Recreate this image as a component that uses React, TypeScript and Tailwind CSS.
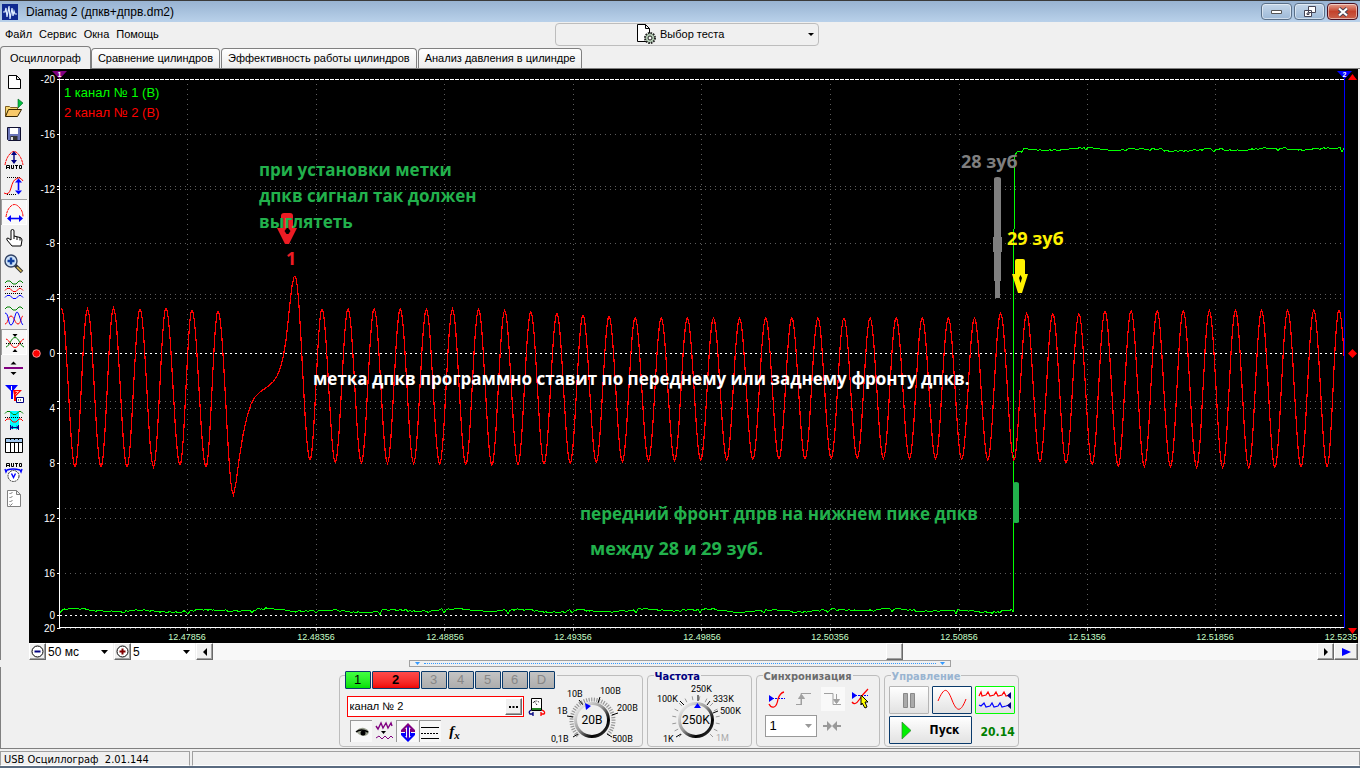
import React, { useState } from 'react';
import { clsx } from 'clsx';

type Point = [number, number];

const menu = ['Файл', 'Сервис', 'Окна', 'Помощь'];
const tabs = ['Осциллограф', 'Сравнение цилиндров', 'Эффективность работы цилиндров', 'Анализ давления в цилиндре'];

// ---------- signals ----------

const PERIOD = 26.1;
const peakLevels: Point[] = [[322, 309], [480, 309], [580, 315], [640, 318], [975, 318], [1001, 313], [1080, 314], [1105, 311], [1345, 310]];
const troughLevels: Point[] = [[322, 462], [500, 465], [640, 461], [850, 458], [1014, 460], [1120, 466], [1240, 468], [1360, 466]];

function lerp(table: Point[], x: number) {
  for (let i = 1; i < table.length; i++) {
    const [x0, y0] = table[i - 1];
    const [x1, y1] = table[i];
    if (x <= x1) return y0 + ((y1 - y0) * (x - x0)) / (x1 - x0);
  }
  return table[table.length - 1][1];
}

function swing(points: Point[]) {
  const out: Point[] = [];
  for (let i = 1; i < points.length; i++) {
    const [x0, y0] = points[i - 1];
    const [x1, y1] = points[i];
    for (let s = 0; s < 12; s++) {
      const t = s / 12;
      out.push([x0 + (x1 - x0) * t, y0 + ((y1 - y0) * (1 - Math.cos(Math.PI * t))) / 2]);
    }
  }
  out.push(points[points.length - 1]);
  return out;
}

const toPath = (points: Point[]) => 'M' + points.map(([x, y]) => `${x.toFixed(1)},${y.toFixed(1)}`).join('L');

function crankSignal() {
  const before: Point[] = [
    [61.5, 308], [75, 467], [87.5, 309], [101, 467], [113.5, 308], [127, 467], [140, 309], [153.5, 467],
    [166, 308], [180, 465], [192, 310], [206, 467], [218, 311], [233.5, 495],
  ];
  const gap: Point[] = [
    [236, 483], [239, 460], [243, 435], [247, 417], [251, 404], [255, 397], [260, 392], [267, 387],
    [273, 382], [277, 376], [280, 369], [283, 358], [286, 340], [288, 322], [290, 303], [292, 286], [294, 277],
  ];
  const after: Point[] = [[295, 276], [310, 460]];
  for (let k = 0; k < 39; k++) {
    const x = 322 + k * PERIOD;
    after.push([x, lerp(peakLevels, x)], [x + 13.3, lerp(troughLevels, x + 13.3)]);
  }
  after.push([1339, 310], [1353, 466]);
  return toPath([...swing(before), ...gap, ...swing(after)]);
}

function noise(from: number, to: number, level: number): Point[] {
  const out: Point[] = [];
  for (let x = from; x <= to; x += 2) {
    const rnd = Math.sin(x * 12.9898) * 43758.5453;
    const dip = Math.round(x - from) % 64 < 2 ? 3 : 0;
    out.push([x, level - Math.sin(x / 10) * 1.1 - Math.sin(x / 33) * 0.8 + (rnd - Math.floor(rnd) - 0.5) * 2 + dip]);
  }
  return out;
}

const redPath = crankSignal();
const greenPath = toPath([
  ...noise(60, 1012, 610.5), [1013, 612], [1013, 455], [1014, 230], [1015, 155], [1017, 152], [1020, 151], ...noise(1022, 1344, 149.5),
]);

const gridX = [187, 316, 444, 573, 701, 830, 959, 1087, 1215];
const gridY = [134, 186, 189, 243, 294, 298, 401, 408, 463, 508, 518, 573];
const axisY: [string, number][] = [
  ['-20', 79], ['-16', 134], ['-12', 189], ['-8', 243], ['-4', 298], ['0', 353], ['4', 408], ['8', 463], ['12', 518], ['16', 573], ['0', 615], ['20', 628],
];
const axisX: [string, number][] = [
  ['12.47856', 187], ['12.48356', 316], ['12.48856', 445], ['12.49356', 573], ['12.49856', 702], ['12.50356', 830], ['12.50856', 959], ['12.51356', 1087], ['12.51856', 1215], ['12.5235', 1341],
];

function Chart() {
  return (
    <svg viewBox="29 69 1329 574" className="block w-full bg-black font-['Liberation_Sans',sans-serif]" role="img" aria-label="Осциллограмма">
      <defs>
        <clipPath id="plot"><rect x="60" y="70" width="1284" height="558" /></clipPath>
      </defs>
      <g stroke="#5c5c5c" strokeDasharray="1 4" shapeRendering="crispEdges">
        {gridX.map((x) => <path key={x} d={`M${x + 0.5} 84V628`} />)}
        {gridY.map((y) => <path key={y} d={`M65 ${y + 0.5}H1344`} />)}
      </g>
      <g stroke="#fff" shapeRendering="crispEdges">
        <path d="M60 79.5H1344" strokeDasharray="4 1" />
        <path d="M60 353.5H1344M60 615.5H1344" strokeDasharray="2 3" />
        <path d="M59.5 74V628M59 627.5H1345" />
        {axisY.map(([label, y]) => <path key={label + y} d={`M57 ${y + 0.5}H60`} />)}
        <path d="M57 186.5H60M57 294.5H60M57 401.5H60M57 508.5H60" />
        <path d="M60 628.5H1344" stroke="#777" strokeDasharray="1 4" />
        {gridX.map((x) => <path key={x} d={`M${x + 0.5} 628V631`} stroke="#aaa" />)}
      </g>
      <g fontSize="10" fill="#fff" textAnchor="end">
        {axisY.map(([label, y]) => <text key={label + y} x="55" y={y + 4}>{label}</text>)}
      </g>
      <g fontSize="9" fill="#c8ffc8" textAnchor="middle">
        {axisX.map(([label, x]) => <text key={label} x={x} y="640">{label}</text>)}
      </g>

      <g fill="none" clipPath="url(#plot)" shapeRendering="crispEdges">
        <path d={greenPath} stroke="#00ff00" />
        <path d={redPath} stroke="#ff0000" strokeWidth="1.2" />
      </g>
      <path d="M1344.5 76V628" stroke="#0000ff" strokeWidth="1.4" shapeRendering="crispEdges" />

      <path d="M52 71h15l-7.500 8z" fill="#800080" />
      <path d="M1337 71h15l-7.500 8z" fill="#0000ff" />
      <g fontSize="7" fontWeight="700" fill="#fff" textAnchor="middle">
        <text x="59.500" y="77">1</text>
        <text x="1344.500" y="77">2</text>
      </g>
      <path d="M1348 80h9l-4.500-6zM1348 628h9l-4.500 6zM1348 353.500l4.500-4.500 4.500 4.500-4.500 4.500z" fill="#ff0000" />
      <circle cx="36.500" cy="353.500" r="3.800" fill="#ff0000" stroke="#ff9090" />

      <g fontSize="13">
        <text x="64" y="97" fill="#00ff00">1 канал № 1 (В)</text>
        <text x="64" y="117" fill="#ff0000">2 канал № 2 (В)</text>
      </g>

      <path d="M281 216q0-3 3-3h6q3 0 3 3v12h4l-8 16h-4l-8-16h4z" fill="#ed1c24" />
      <path d="M287.500 227l3 4-2 3h-2l-2-3z" fill="#000" />
      <path d="M1015 261q0-2 2-2h6q2 0 2 2v13h3l-6 19h-4l-6-19h3z" fill="#fff200" />
      <path d="M1020.500 275l1.500 3-1.500 5-1.500-5z" fill="#000" />
      <path d="M994 179q0-2 3-2h1q3 0 3 2v58h1v15h-1v29h-1v17h-5v-17h-1v-29h-1v-15h1z" fill="#7f7f7f" />
      <path d="M1013 484q0-2 3-2t3 2v38q0 1-3 1t-3-1z" fill="#22b14c" />

      <g fontSize="17" fontWeight="700" fill="#22b14c" className="font-['Open_Sans',sans-serif]">
        <text x="259" y="176">при установки метки</text>
        <text x="259" y="202">дпкв сигнал так должен</text>
        <text x="259" y="228">выглятеть</text>
        <text x="286" y="265" fontSize="18" fill="#ed1c24">1</text>
        <text x="961" y="168" fontSize="18" fill="#7f7f7f">28 зуб</text>
        <text x="1007" y="245" fontSize="18" fill="#fff200">29 зуб</text>
        <text x="313" y="385" fill="#fff">метка дпкв программно ставит по переднему или заднему фронту дпкв.</text>
        <text x="580" y="520">передний фронт дпрв на нижнем пике дпкв</text>
        <text x="590" y="555" fontSize="18">между 28 и 29 зуб.</text>
      </g>
    </svg>
  );
}

// ---------- toolbar ----------

const wave = (y: number) => `M4 ${y + 2}l2-2h3l3 3h3l3-3h2l2 2`;
const dots = { stroke: '#000', strokeDasharray: '1 1' };

const tools: { label: string; on?: boolean; art: React.ReactNode }[] = [
  { label: 'Новый', art: <path d="M7.500 6.500h8l4 4v9h-12zM15.500 6.500v4h4" fill="#fff" stroke="#000" /> },
  {
    label: 'Открыть',
    art: (
      <>
        <path d="M4.500 21V11.500h4l1 1h7v2" fill="#f7d774" stroke="#806020" />
        <path d="M4.500 21.500l3-7h13l-4 7z" fill="#f9c96a" stroke="#332200" />
        <path d="M17 4l5 4-5 5z" fill="#00c040" stroke="#006020" strokeWidth=".6" />
      </>
    ),
  },
  {
    label: 'Сохранить',
    art: (
      <>
        <path d="M6.500 6.500h13v13h-12l-1-1z" fill="#6a74b8" stroke="#101030" />
        <path d="M9 7h8v6H9z" fill="#fff" />
        <path d="M9.500 15h7v4h-7z" fill="#333" />
        <path d="M10 16h2v3h-2z" fill="#ddd" />
      </>
    ),
  },
  {
    label: 'Авто амплитуда',
    art: (
      <>
        <path d="M4 18q1-6 4-10 5-7 10 0 3 4 4 10" stroke="#f00" strokeDasharray="3 .6" />
        <path d="M13 7v8" stroke="#000080" strokeWidth="1.400" />
        <path d="M10 8l3-4 3 4zM10 13l3 4 3-4z" fill="#000080" />
        <path d="M5.500 22v-3.500h3V22M5.500 20.500h3M10.500 18v3.500h2V18M14 18.500h3M15.500 18.500V22M18.500 18.500h2v3h-2z" stroke="#000" />
      </>
    ),
  },
  {
    label: 'Масштаб по вертикали',
    art: (
      <>
        <path d="M6 4.500h14M6 21.500h10" {...dots} />
        <path d="M3 20q5 3 7-5t5-9q4-3 7 2" stroke="#f00" />
        <path d="M17.500 9v8" stroke="#00f" strokeWidth="1.600" />
        <path d="M14 9.500l3.500-4 3.500 4zM14 17.500l3.500 4 3.500-4z" fill="#00f" />
      </>
    ),
  },
  {
    label: 'Масштаб по горизонтали',
    on: true,
    art: (
      <>
        <path d="M5 18q1-7 4-10 4.500-5 9 0 4 4 4 10" stroke="#f00" strokeDasharray="3 .6" />
        <path d="M9 19.500h9" stroke="#00f" strokeWidth="1.600" />
        <path d="M10 16l-4 3.500 4 3.500zM18 16l4 3.500-4 3.500z" fill="#00f" />
      </>
    ),
  },
  {
    label: 'Рука',
    art: <path d="M11 21l-5-6q-1-2 1-2l3 2V6q0-1.500 1.500-1.500T13 6v5l6 1.500q2 .5 2 2.500l-1 6zM13 11v3M16 12v3M19 12.500v3" fill="#fff" stroke="#000" />,
  },
  {
    label: 'Лупа',
    art: (
      <>
        <path d="M14 14l7 7" stroke="#333" strokeWidth="3.500" />
        <path d="M16 16l4.500 4.500" stroke="#e0c050" strokeWidth="1.500" />
        <circle cx="10" cy="10" r="6" fill="#cfe4fa" stroke="#334466" strokeWidth="1.400" />
        <path d="M10 6.500v7M6.500 10h7" stroke="#1040a0" strokeWidth="2.400" />
      </>
    ),
  },
  {
    label: 'Разнести каналы',
    art: (
      <>
        <path d={wave(4)} stroke="#008000" />
        <path d="M4 9.500h18M4 16.500h18" {...dots} />
        <path d={wave(11.5)} stroke="#f00" />
        <path d={wave(18.5)} stroke="#00f" />
      </>
    ),
  },
  {
    label: 'Наложить каналы',
    art: (
      <>
        <path d={wave(4)} stroke="#008000" />
        <path d="M4 21C7 21 7 13 10 13s4 8 7 8 3-8 5-8" stroke="#f00" />
        <path d="M4 10C8 10 7 22 10 22S14 9 16 9s4 12 6 13" stroke="#00f" />
      </>
    ),
  },
  {
    label: 'Совместить нули',
    on: true,
    art: (
      <>
        <path d="M11.500 5h5L14 8zM11.500 23h5L14 20z" fill="#000" />
        <path d="M5 18C9 17 10 8.500 14 8.500s5 8.500 9 9.500" stroke="#008000" />
        <path d="M5 10C9 11 10 18.500 14 18.500s5-7.500 9-8.500" stroke="#f00" />
        <path d="M5 14.500h18" {...dots} />
      </>
    ),
  },
  {
    label: 'Сдвиг',
    art: (
      <>
        <path d="M9.500 9.500h6l-3-3zM9.500 17h6l-3 3z" fill="#000" />
        <path d="M3 13h19" stroke="#800080" strokeWidth="2" />
      </>
    ),
  },
  {
    label: 'Метки',
    art: (
      <>
        <path d="M4 4h13l-5 6v8h-2v-8z" fill="#00f" />
        <path d="M10.500 5v4" stroke="#fff" />
        <path d="M12 9h9l-6 6v5h-2v-6z" fill="#f00" />
        <path d="M14.500 10.500h3l-3 3" stroke="#fff" strokeWidth=".7" />
        <path d="M15.500 16.500h7v5h-7z" fill="#fff" stroke="#000080" />
        <path d="M17 19h4" stroke="#000" strokeDasharray="1 1" />
      </>
    ),
  },
  {
    label: 'Область',
    art: (
      <>
        <path d="M9 4h9v18H9z" fill="#0ff" />
        <path d={wave(4.5)} stroke="#008000" />
        <path d="M4 10.500h18" {...dots} />
        <path d={wave(12)} stroke="#f00" />
        <path d="M9.500 18v5M17.500 18v5M10 20.500h8M12 19l-2 1.500 2 1.500M15.500 19l2 1.500-2 1.500" stroke="#000080" />
      </>
    ),
  },
  {
    label: 'Таблица',
    art: (
      <>
        <path d="M4.500 5.500h17v14h-17z" fill="#fff" stroke="#000" />
        <path d="M5 6h16v3H5z" fill="#a0c8f0" />
        <path d="M4 9.500h18M9.500 9v10M13.500 9v10M17.500 9v10M9.500 6v1M13.500 6v1M17.500 6v1" stroke="#000" />
      </>
    ),
  },
  {
    label: 'Авто напряжение',
    art: (
      <>
        <path d="M5.500 8V4.500h3V8M5.500 6.500h3M10.500 4v3.500h2V4M14 4.500h3M15.500 4.500V8M18.500 4.500h2v3h-2z" stroke="#000" />
        <path d="M4 10l1 3 1-2q6-2 13 0l1 2 1-3" stroke="#00f" strokeWidth="1.400" />
        <circle cx="12.500" cy="17" r="5.500" fill="#fff" stroke="#333" strokeDasharray="2 .7" />
        <path d="M10.500 14.500l2 4 2-4" stroke="#00f" strokeWidth="1.400" />
      </>
    ),
  },
  {
    label: 'Отчёт',
    art: (
      <path d="M6.500 5.500h9l4 4v12h-13zM15.500 5.500v4h4M8.500 8l1 1 2-2M8.500 12l1 1 2-2M8.500 16l1 1 2-2M8.500 19.500l1 1 2-2" fill="#fff" stroke="#808080" />
    ),
  },
];

// ---------- small parts ----------

function Select({ label, value, className, box }: { label: string; value: string; className?: string; box?: string }) {
  return (
    <span className={clsx('relative flex', box)}>
      <select aria-label={label} defaultValue={value} className={clsx('w-full appearance-none bg-white pl-0.5 outline-none', className)}>
        <option>{value}</option>
      </select>
      <svg className="pointer-events-none absolute right-[5px] top-1/2 -mt-0.5 h-1 w-[7px]" viewBox="0 0 7 4"><path d="M0 0h7L3.500 4z" fill="currentColor" /></svg>
    </span>
  );
}

const raised = 'flex items-center justify-center border border-t-white border-l-white border-r-[#696969] border-b-[#696969] bg-[#f0f0f0] shadow-[inset_-1px_-1px_0_#a0a0a0]';

function Group({ title, color, className, children }: { title: string; color: string; className: string; children: React.ReactNode }) {
  return (
    <section className={clsx('h-[72px] rounded border border-[#bdbdbd]', className)}>
      <h2 className={clsx("-mt-[5px] ml-1.5 w-fit bg-[#f0f0f0] px-px font-['DejaVu_Sans_Condensed','DejaVu_Sans',sans-serif] text-[11px] leading-3 font-bold", color)}>{title}</h2>
      {children}
    </section>
  );
}

function ticks(cx: number, cy: number, r0: number, r1: number, step: number) {
  let d = '';
  for (let a = -225; a <= 46; a += step) {
    const c = Math.cos((a * Math.PI) / 180);
    const s = Math.sin((a * Math.PI) / 180);
    d += `M${(cx + r0 * c).toFixed(1)} ${(cy + r0 * s).toFixed(1)}L${(cx + r1 * c).toFixed(1)} ${(cy + r1 * s).toFixed(1)}`;
  }
  return d;
}

function KnobFace({ cx, cy, value }: { cx: number; cy: number; value: string }) {
  return (
    <>
      <circle cx={cx} cy={cy} r="16.500" fill="#efefef" stroke="url(#rim)" strokeWidth="3" />
      <text x={cx} y={cy + 4} fontSize="12" textAnchor="middle">{value}</text>
    </>
  );
}

function VoltKnob() {
  return (
    <svg width="92" height="62" viewBox="549 684 92 62" role="img" aria-label="20В" className="font-['Roboto',sans-serif]">
      <defs>
        <linearGradient id="rim" x1="0" y1="0" x2="1" y2="1">
          <stop offset="0" stopColor="#fff" /><stop offset=".45" stopColor="#999" /><stop offset=".75" stopColor="#000" /><stop offset="1" stopColor="#444" />
        </linearGradient>
      </defs>
      <path d={ticks(592.5, 720.5, 19, 23, 7)} stroke="#999" strokeWidth="1.200" />
      <path d="M567 716l6 1M579 700l4 5M600 697l-2 6M618 713l-6 2M573 737l5-3M612 737l-5-3" stroke="#000" />
      <KnobFace cx={592} cy={720} value="20В" />
      <path d="M585 703l6 3-5 4z" fill="#00f" />
      <g fontSize="9">
        <text x="567" y="697">10В</text><text x="600" y="694">100В</text><text x="557" y="714">1В</text>
        <text x="617" y="711">200В</text><text x="551" y="742">0,1В</text><text x="612" y="742">500В</text>
      </g>
    </svg>
  );
}

function RateKnob() {
  return (
    <svg width="98" height="62" viewBox="650 683 98 62" role="img" aria-label="250K" className="font-['Roboto',sans-serif]">
      <path d={ticks(696, 720, 20, 24, 18)} stroke="#999" />
      <path d="M680 701l4 4M698 695v6M710 701l-3 4M718 711l-5 2M676 737l5-3" stroke="#000" />
      <KnobFace cx={696} cy={720} value="250K" />
      <path d="M694 708l3.500-5 3.500 5z" fill="#00f" />
      <g fontSize="9">
        <text x="691" y="692">250K</text><text x="657" y="702">100K</text><text x="713" y="702">333K</text>
        <text x="720" y="714">500K</text><text x="663" y="742">1K</text><text x="716" y="741" fill="#aaa">1M</text>
      </g>
    </svg>
  );
}

const channelTabs = ['1', '2', '3', '4', '5', '6', 'D'];
const blueEdge = 'border border-[#0a3a6b]';
const sunken = 'border-t border-l border-t-[#999] border-l-[#999] bg-[#f8f8f8]';

function ChannelGroup() {
  const [name, setName] = useState('канал № 2');
  return (
    <section className="flex h-[72px] w-[304px] rounded border border-[#bdbdbd]">
      <div className="-mt-[5px] ml-[5px] w-[204px]">
        <div className="flex w-[212px] gap-px bg-[#f0f0f0] text-[13px] text-[#888]">
          {channelTabs.map((c) => (
            <button
              key={c}
              className={clsx(
                'h-[18px] rounded-[1px] leading-4', blueEdge,
                c === '1' && 'w-[26px] bg-linear-to-b from-[#40ff40] to-[#00e000] text-black',
                c === '2' && 'w-12 bg-linear-to-b from-[#ff4a4a] to-[#f00000] font-bold text-black',
                c !== '1' && c !== '2' && 'w-[26px] bg-linear-to-b from-[#c4c4c4] to-[#adadad]'
              )}
            >
              {c}
            </button>
          ))}
        </div>
        <div className="mt-[7px] ml-0.5 flex items-center gap-1">
          <div className="flex h-[21px] w-[177px] shrink-0 items-center border border-[#f00] bg-white pr-px">
            <input aria-label="Имя канала" value={name} onChange={(e) => setName(e.target.value)} className="w-0 grow pl-0.5 text-[11px] outline-none" />
            <button aria-label="Выбрать канал" className={clsx(raised, 'h-[17px] w-[17px]')}>
              <svg width="9" height="2"><path d="M0 1h2M3.500 1h2M7 1h2" stroke="#000" strokeWidth="2" /></svg>
            </button>
          </div>
          <button aria-label="Прибор" className="shrink-0">
            <svg width="18" height="20" fill="none">
              <path d="M3.500 1.500h10v12h-10z" fill="#fff" stroke="#000" /><path d="M4 11h9v2H4z" fill="#208020" />
              <path d="M5 6q3-4 7 0M9 8L6 4" stroke="#000" strokeDasharray="1 1" />
              <path d="M3 13q-3 2-1 4h3M5 15v4" stroke="#000080" strokeWidth="1.300" /><path d="M14 13q4 2 2 4h-3M13 15v4" stroke="#f00" strokeWidth="1.300" />
            </svg>
          </button>
        </div>
        <div className="mt-[3px] flex h-[22px] gap-px pl-[5px]">
          <button aria-label="Видимость" className={clsx('w-[22px] pl-1', sunken)}>
            <svg width="15" height="14"><path d="M1 6q4-4 8-3 4 1 5 4-1 4-6 4-5-1-7-5z" fill="#9aa090" /><path d="M1 7q5-4 12 0" stroke="#000" fill="none" strokeWidth="1.500" /><circle cx="8" cy="8" r="2.500" /></svg>
          </button>
          <button aria-label="Фильтр" className="w-[22px] pl-0.5">
            <svg width="18" height="20" fill="none" stroke="#800080"><path d="M1 5l2 3 3-6 2 5 3-5 2 5 3-5 1 3" strokeWidth="1.400" /><path d="M6 10h5l-2.500 3z" fill="#000" stroke="none" /><path d="M1 17l3-2 3 3 3-3 3 3 3-3 2 2" /></svg>
          </button>
          <button aria-label="Инверсия" className={clsx('w-[22px] pl-0.5', sunken)}>
            <svg width="18" height="20"><path d="M9 1l7 7v2h-4v1H6v-1H2V8z" fill="#800080" /><path d="M9 20l7-7v-2h-4v-1H6v1H2v2z" fill="#00f" /><path d="M9 4l3 3h-1v7h1l-3 3-3-3h1V7H6z" fill="#f8f8f8" /><path d="M9 4v13" stroke="#40c" strokeWidth="2" /></svg>
          </button>
          <button aria-label="Уровни" className={clsx('w-[22px] pl-px', sunken)}>
            <svg width="18" height="18" stroke="#000"><path d="M0 4.500h18M0 15.500h18" /><path d="M0 10.500h18" strokeDasharray="2 1" /></svg>
          </button>
          <button aria-label="Функция" className="w-[26px] font-['Liberation_Serif',serif] text-[15px] leading-5 font-bold italic">f<sub className="text-[11px]">x</sub></button>
        </div>
      </div>
      <div className="mt-2"><VoltKnob /></div>
    </section>
  );
}

function SyncGroup() {
  return (
    <Group title="Синхронизация" color="text-[#6d6d6d]" className="w-[124px]">
      <div className="mt-1 flex h-[24px] gap-1 pl-2">
        <button aria-label="Синхронизация по каналу" className="w-6"><svg width="22" height="22" fill="none"><path d="M4 10.500h16" stroke="#00f" strokeDasharray="2 1" /><path d="M4 7v7l5-3.500z" fill="#00f" /><path d="M4 16q2 4 5 3t4-8q2-6 6-7" stroke="#f00" strokeWidth="1.300" /></svg></button>
        <button aria-label="По фронту" className="w-6"><svg width="22" height="22" fill="none" stroke="#a0a0a0"><path d="M3 16.500h5V5.500h10M8.500 9v8" /><path d="M5.500 10.500h6l-3-4z" fill="#a0a0a0" /></svg></button>
        <button aria-label="По спаду" className="w-6 bg-[#f9f9f9]"><svg width="22" height="22" fill="none" stroke="#a0a0a0"><path d="M3 5.500h9v11h8M15.500 6v8" /><path d="M12.500 11.500h6l-3 4z" fill="#a0a0a0" /></svg></button>
        <button aria-label="По метке" className="w-6"><svg width="24" height="24" fill="none"><path d="M3 8.500h16" stroke="#00f" strokeDasharray="2 1" /><path d="M3 5v7l5-3.500z" fill="#00f" /><path d="M3 15q3 4 7-2t9-11" stroke="#f00" strokeWidth="1.300" /><path d="M12 8l7 7h-3l2 5-2 1-3-5-1 2z" fill="#ff0" stroke="#000" /></svg></button>
      </div>
      <div className="mt-1 flex items-center gap-1.5 pl-2 text-[#999]">
        <Select label="Канал синхронизации" value="1" box="h-[22px] w-[52px]" className="border border-[#999] bg-[#f0f0f0] pl-1 text-[13px] text-black" />
        <svg width="18" height="10" fill="#999"><path d="M0 4h4V0l5 5-5 5V6H0zM18 4h-4V0L9 5l5 5V6h4z" /></svg>
      </div>
    </Group>
  );
}

function ControlGroup() {
  const btn = 'flex h-7 items-center justify-center rounded-[1px] bg-linear-to-b from-white to-[#e2e2e2]';
  return (
    <Group title="Управление" color="text-[#99b4d1]" className="w-[135px]">
      <div className="mt-[3px] flex gap-[3px] pl-1">
        <button aria-label="Пауза" className={clsx(btn, 'w-10 border border-[#b5b5b5]')}><svg width="12" height="15" fill="#aaa" stroke="#888"><path d="M.5.500h4v14h-4zM7.500.500h4v14h-4z" /></svg></button>
        <button aria-label="Осциллограф" className={clsx(btn, blueEdge, 'w-10')}><svg width="30" height="22" fill="none" stroke="#f00"><path d="M1 12C7-2 10-2 15 11s9 12 14-1" /></svg></button>
        <button aria-label="Самописец" className={clsx(btn, 'w-10 border border-[#00ff00]')}>
          <svg width="34" height="20" fill="none"><path d="M1 6l2-4 1 4 4-1 2-3 2 4 4-1 2-3 2 4 4-1 2-3 2 4 4-1" stroke="#f00" strokeWidth="1.200" /><path d="M1 15l2 1 3-3 2 4 4-1 2-3 2 4 4-1 2-3 2 4 4-1 3-1" stroke="#00f" strokeWidth="1.200" /><path d="M33 2v7l-4-3.500zM33 12v7l-4-3.500z" fill="#000080" /></svg>
        </button>
      </div>
      <div className="mt-0.5 flex items-center gap-[9px] pl-1 font-['DejaVu_Sans_Condensed','DejaVu_Sans',sans-serif] text-[12px] font-bold">
        <button className={clsx(btn, blueEdge, 'w-[83px] gap-[18px]')}>
          <svg width="11" height="19"><path d="M1 1l9 8.500L1 18z" fill="#00f000" stroke="#3a7a3a" strokeWidth=".7" /></svg>
          Пуск
        </button>
        <span className="pt-1 text-[#007f00]">20.14</span>
      </div>
    </Group>
  );
}

export default function App() {
  const [tab, setTab] = useState(0);
  const caption = 'flex h-[17px] items-center justify-center rounded-sm border shadow-[inset_0_0_0_1px_#ffffff80]';

  return (
    <div className="flex min-h-screen flex-col bg-[#f0f0f0] font-['Liberation_Sans',sans-serif] text-[11px] text-black select-none">
      <header className="flex h-[22px] shrink-0 items-center border-t border-[#3a3a3a] bg-linear-to-b from-[#98b3d2] to-[#b9d1ea] pr-0.5 pl-0.5">
        <svg width="16" height="16" className="mr-2 shrink-0"><path d="M0 0h16v16H0z" fill="#102a90" /><path d="M1 8h2l1-4 1 9 2-11 1 13 2-11 1 8 1-5 1 3h2" fill="none" stroke="#dcecff" strokeWidth="1.200" /></svg>
        <h1 className="grow text-[12px]">Diamag 2 (дпкв+дпрв.dm2)</h1>
        <div className="flex gap-0.5">
          <button aria-label="Свернуть" className={clsx(caption, 'w-[31px] border-[#5a7088] bg-linear-to-b from-[#c4d6e9] to-[#9db9d7]')}><svg width="12" height="6"><path d="M.5 1.500h10v3H.5z" fill="#fff" stroke="#555" /></svg></button>
          <button aria-label="Развернуть" className={clsx(caption, 'w-[31px] border-[#5a7088] bg-linear-to-b from-[#c4d6e9] to-[#9db9d7]')}><svg width="12" height="12" fill="#fff" stroke="#445"><path d="M4.500.500h7v6h-7zM.5 4.500h7v6h-7zM3 7h2v1.500H3z" /></svg></button>
          <button aria-label="Закрыть" className={clsx(caption, 'w-[31px] border-[#4a1020] bg-linear-to-b from-[#e3a08f] via-[#c4422c] to-[#c9604a]')}><svg width="12" height="10"><path d="M2 1.500l8 7M10 1.500l-8 7" stroke="#445" strokeWidth="4" /><path d="M2 1.500l8 7M10 1.500l-8 7" stroke="#fff" strokeWidth="2.200" /></svg></button>
        </div>
      </header>

      <div className="grid h-6 shrink-0 grid-cols-[1fr_auto_1fr] items-center">
        <nav className="flex gap-[7px] pl-[5px]">
          {menu.map((m) => <button key={m}>{m}</button>)}
        </nav>
        <button className="ml-3.5 flex h-[23px] w-[264px] items-center rounded border border-[#bdbdbd] pr-1 pl-20">
          <svg width="20" height="20" className="mr-1">
            <path d="M1.500.500h8l4 4v13h-12zM9.500.500v4h4" fill="#fff" stroke="#000" />
            <circle cx="14" cy="14" r="5" fill="#b8d0b8" stroke="#222" strokeWidth="2" strokeDasharray="1.600 1" /><circle cx="14" cy="14" r="2" fill="#fff" stroke="#222" />
          </svg>
          <span className="grow text-left">Выбор теста</span>
          <svg width="6" height="3"><path d="M0 0h6L3 3z" /></svg>
        </button>
      </div>

      <div role="tablist" className="flex h-[23px] shrink-0 items-end border-b border-[#808080]">
        {tabs.map((t, i) => (
          <button
            key={t}
            role="tab"
            aria-selected={tab === i}
            onClick={() => setTab(i)}
            className={clsx(
              'rounded-t border-t border-r border-l border-[#808080]',
              tab === i ? '-mb-px h-[23px] bg-[#f0f0f0] px-[9px]' : 'mr-px h-5 bg-linear-to-b from-white to-[#ececec] px-1.5'
            )}
          >
            {t}
          </button>
        ))}
      </div>

      <main className="flex border-l border-[#808080] pr-0.5">
        <div role="toolbar" className="flex w-7 shrink-0 flex-col">
          {tools.map((t) => (
            <button key={t.label} aria-label={t.label} title={t.label} className={clsx('h-[26px] w-[26px]', t.on && 'bg-[#f9f9f9] shadow-[inset_1px_1px_0_#a0a0a0,inset_-1px_-1px_0_#ffffff]')}>
              <svg width="26" height="26" fill="none">{t.art}</svg>
            </button>
          ))}
        </div>
        <div className="min-w-0 grow">
          <Chart />
          <div className="flex h-[17px] text-[12px]">
            <button aria-label="Уменьшить" className={clsx(raised, 'w-[17px]')}><svg width="13" height="13" fill="#fff"><circle cx="6.500" cy="6.500" r="5.500" stroke="#000" /><path d="M3.500 6.500h6" stroke="#000080" strokeWidth="2" /></svg></button>
            <Select label="Развёртка" value="50 мс" box="w-[67px]" />
            <button aria-label="Увеличить" className={clsx(raised, 'ml-px w-[17px]')}><svg width="13" height="13" fill="#fff"><circle cx="6.500" cy="6.500" r="5.500" stroke="#000" /><path d="M3.500 6.500h6M6.500 3.500v6" stroke="#800000" strokeWidth="2" /></svg></button>
            <Select label="Множитель" value="5" box="w-[64px]" />
            <button aria-label="Влево" className={clsx(raised, 'ml-px w-[17px]')}><svg width="4" height="8"><path d="M4 0v8L0 4z" /></svg></button>
            <div className="flex grow bg-[#f8f8f8]">
              <div className="w-[61%]" />
              <div className={clsx(raised, 'w-[17px]')} />
            </div>
            <button aria-label="Вправо" className={clsx(raised, 'w-[17px]')}><svg width="4" height="8"><path d="M0 0v8l4-4z" /></svg></button>
            <button aria-label="Воспроизвести" className={clsx(raised, 'w-6')}><svg width="9" height="8"><path d="M0 0v8l9-4z" fill="#00f" /></svg></button>
          </div>
        </div>
      </main>

      <div className="mx-auto flex h-[7px] w-[542px] shrink-0 items-center justify-between border border-[#a0a0a0] px-[5px]">
        <svg width="5" height="3"><path d="M0 0h5L2.500 3z" fill="#3399ff" /></svg>
        <div className="mx-1 h-px grow border-t border-dotted border-[#3399ff]" />
        <svg width="5" height="3"><path d="M0 0h5L2.500 3z" fill="#3399ff" /></svg>
      </div>

      <div className="flex grow justify-center gap-1 border-b border-l border-[#808080] pt-2 pr-1">
        <ChannelGroup />
        <Group title="Частота" color="text-[#000080]" className="w-[105px]">
          <div className="pl-0.5"><RateKnob /></div>
        </Group>
        <SyncGroup />
        <ControlGroup />
      </div>

      <footer className="flex h-[19px] shrink-0 gap-0.5 border-b-2 border-[#5a6b80] pt-0.5">
        <div className="w-[190px] border border-[#a0a0a0] border-b-white pl-[3px] font-['DejaVu_Sans_Condensed','DejaVu_Sans',sans-serif] leading-[15px] whitespace-pre">USB Осциллограф  2.01.144</div>
        <div className="grow border border-[#a0a0a0] border-b-white" />
      </footer>
    </div>
  );
}
